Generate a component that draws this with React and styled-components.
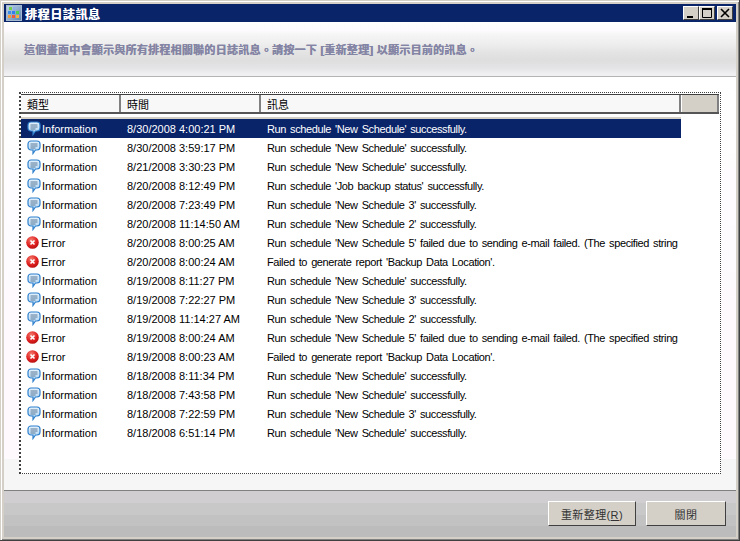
import styled, { createGlobalStyle } from "styled-components"

const GlobalStyle = createGlobalStyle`
    html, body {
        margin: 0;
        padding: 0;
        background: #d4d0c8;
    }
`;
const FONT = `"Liberation Sans", "Noto Sans CJK TC", sans-serif`;

const Win = styled.div`
    box-sizing: border-box;
    width: 740px;
    height: 541px;
    display: flex;
    flex-direction: column;
    background: #d4d0c8;
    padding: 4px 3px 3px 4px;
    border-right: 1px solid #404040;
    border-bottom: 1px solid #404040;
    box-shadow: inset 1px 1px 0 #d4d0c8, inset 2px 2px 0 #fff, inset -1px -1px 0 #808080;
    font-family: ${FONT};
    font-size: 11px;
    color: #000;
`;
const TitleBar = styled.div`
    height: 18px;
    flex: none;
    display: flex;
    align-items: center;
    background: #0a246a;
    padding: 0 3px 0 2px;
`;
const TitleText = styled.span`
    margin-left: 3px;
    font-size: 12px;
    font-weight: 700;
    letter-spacing: 0.6px;
    color: #fff;
    flex: 1;
    text-shadow: 0.3px 0 0 #fff;
`;
const WinBtn = styled.button`
    box-sizing: border-box;
    width: 16px;
    height: 14px;
    padding: 0;
    margin-left: ${(p) => p.$gap || 0}px;
    border: 1px solid;
    border-color: #fff #404040 #404040 #fff;
    background: #d4d0c8;
    display: flex;
    align-items: center;
    justify-content: center;
`;
const Header = styled.div`
    height: 55px;
    flex: none;
    box-sizing: border-box;
    padding: 0 0 0 20px;
    display: flex;
    align-items: center;
    background: linear-gradient(#ffffff 0, #fdfbfd 8px, #f4f4f4 14px, #eeeeee 22px, #e4e4e4 30px, #dedede 38px, #e4e3e6 46px, #f0eff1 52px);
    border-bottom: 1px solid #b4b4b4;
`;
const HeaderText = styled.div`
    font-size: 11px;
    font-weight: 700;
    color: #8484a4;
    letter-spacing: 0.27px;
    text-shadow: 0.3px 0 0 #8484a4;
`;
const Content = styled.div`
    flex: 1;
    min-height: 0;
    padding: 15px 15px 16px 15px;
    background: linear-gradient(#ffffff 0, #fdf9fd 60%, #fdf9fd 92.5%, #f6f6f6 92.5%);
    display: flex;
`;
const ListBox = styled.div`
    flex: 1;
    min-width: 0;
    box-sizing: border-box;
    border: 1px dotted #404040;
    border-left: 2px dotted #404040;
    background: #fff;
    padding: 1px 1px 0 0;
    overflow: hidden;
`;
const Columns = styled.div`
    height: 20px;
    display: flex;
    background: #f8f8f8;
    border-top: 1px solid #404040;
    border-bottom: 2px solid #555;
    box-sizing: border-box;
`;
const Column = styled.div`
    box-sizing: border-box;
    width: ${(p) => p.$w}px;
    flex: ${(p) => (p.$grow ? 1 : "none")};
    padding-left: 6px;
    line-height: 20px;
    background: ${(p) => (p.$grow ? "#d4d0c8" : "#f8f8f8")};
    border-right: 2px solid #808080;
    border-left: ${(p) => (p.$grow ? "1px solid #fff" : "none")};
`;
const Rows = styled.div`
    margin-top: 5px;
`;
const Row = styled.div`
    width: 660px;
    height: 19px;
    display: flex;
    align-items: center;
    white-space: nowrap;
    background: ${(p) => (p.$selected ? "#0a246a" : "transparent")};
    color: ${(p) => (p.$selected ? "#fff" : "#000")};
    box-shadow: ${(p) => (p.$selected ? "0 -2px 0 #d4d0c8" : "none")};
`;
const TypeCell = styled.div`
    width: 105px;
    flex: none;
    box-sizing: border-box;
    padding-left: ${(p) => (p.$error ? 5 : 6)}px;
    display: flex;
    align-items: center;
    gap: ${(p) => (p.$error ? 2 : 1)}px;
`;
const TimeCell = styled.div`
    width: 140px;
    flex: none;
    padding-left: 1px;
    box-sizing: border-box;
`;
const MsgCell = styled.div`
    flex: 1;
    min-width: 0;
    padding-left: 1px;
    letter-spacing: -0.39px;
    word-spacing: 1.4px;
`;
const Footer = styled.div`
    height: 47px;
    flex: none;
    box-sizing: border-box;
    border-top: 1px solid #808080;
    background: linear-gradient(#d0ced0 0, #d0ced0 12px, #c8c8c8 12px, #c8c8c8 24px, #c2c2c2 24px, #c2c2c2 35px, #bcbcbc 35px);
    display: flex;
    justify-content: flex-end;
    align-items: flex-start;
    gap: 10px;
    padding: 10px 10px 0 0;
`;
const Button = styled.button`
    box-sizing: border-box;
    width: ${(p) => p.$w}px;
    height: 25px;
    padding: 0;
    background: #d4d0c8;
    border: 1px solid;
    border-color: #fff #404040 #404040 #fff;
    font-family: ${FONT};
    font-size: 11px;
    letter-spacing: 0.4px;
    color: #333;
`;
const Underline = styled.span`
    text-decoration: underline;
`;

const AppIcon = () => (
    <svg width="16" height="16" viewBox="0 0 16 16">
        <defs>
            <linearGradient id="appbg" x1="0" y1="0" x2="1" y2="1">
                <stop offset="0" stopColor="#c4d6ea" />
                <stop offset="1" stopColor="#5b83b0" />
            </linearGradient>
        </defs>
        <rect x="0.5" y="0.5" width="15" height="15" fill="url(#appbg)" stroke="#a4b8d0" />
        <rect x="3" y="2" width="3" height="3" fill="#72d04a" />
        <rect x="7" y="2" width="3" height="3" fill="#8fb0e0" />
        <rect x="2" y="6" width="3" height="3" fill="#3f8fe8" />
        <rect x="6" y="6" width="3" height="3" fill="#2f7ff0" />
        <rect x="10" y="6" width="3" height="3" fill="#4cd050" />
        <rect x="2" y="10" width="3" height="3" fill="#f09a3c" />
        <rect x="6" y="10" width="3" height="3" fill="#f0583a" />
        <rect x="10" y="10" width="3" height="3" fill="#f8b03c" />
    </svg>
);

const InfoIcon = () => (
    <svg width="14" height="15" viewBox="0 0 14 15">
        <defs>
            <linearGradient id="bubble" x1="0" y1="0" x2="0" y2="1">
                <stop offset="0" stopColor="#e4f1fc" />
                <stop offset="1" stopColor="#a8d2f4" />
            </linearGradient>
        </defs>
        <path
            d="M4 1h6a3 3 0 0 1 3 3v3a3 3 0 0 1-3 3H8.500L6 13.500V10H4a3 3 0 0 1-3-3V4a3 3 0 0 1 3-3z"
            fill="url(#bubble)"
            stroke="#2f80cc"
            strokeWidth="1.200"
        />
        <path d="M3.500 4h7M3.500 6h7M3.500 8h5" stroke="#5f7a96" strokeWidth="1" />
    </svg>
);

const ErrorIcon = () => (
    <svg width="13" height="13" viewBox="0 0 13 13">
        <defs>
            <radialGradient id="err" cx="0.4" cy="0.3" r="0.8">
                <stop offset="0" stopColor="#f47a6c" />
                <stop offset="0.6" stopColor="#dd1d1d" />
                <stop offset="1" stopColor="#a80d0d" />
            </radialGradient>
        </defs>
        <circle cx="6.500" cy="6.500" r="6.300" fill="url(#err)" />
        <path d="M4.500 4.500l4 4M8.500 4.500l-4 4" stroke="#fff" strokeWidth="1.600" />
    </svg>
);

const DOING = "Run schedule";
const FAILED = `${DOING} 'New Schedule 5' failed due to sending e-mail failed. (The specified string`;
const REPORT = "Failed to generate report 'Backup Data Location'.";
const ok = (name) => `${DOING} '${name}' successfully.`;

const logs = [
    ["Information", "8/30/2008 4:00:21 PM", ok("New Schedule")],
    ["Information", "8/30/2008 3:59:17 PM", ok("New Schedule")],
    ["Information", "8/21/2008 3:30:23 PM", ok("New Schedule")],
    ["Information", "8/20/2008 8:12:49 PM", ok("Job backup status")],
    ["Information", "8/20/2008 7:23:49 PM", ok("New Schedule 3")],
    ["Information", "8/20/2008 11:14:50 AM", ok("New Schedule 2")],
    ["Error", "8/20/2008 8:00:25 AM", FAILED],
    ["Error", "8/20/2008 8:00:24 AM", REPORT],
    ["Information", "8/19/2008 8:11:27 PM", ok("New Schedule")],
    ["Information", "8/19/2008 7:22:27 PM", ok("New Schedule 3")],
    ["Information", "8/19/2008 11:14:27 AM", ok("New Schedule 2")],
    ["Error", "8/19/2008 8:00:24 AM", FAILED],
    ["Error", "8/19/2008 8:00:23 AM", REPORT],
    ["Information", "8/18/2008 8:11:34 PM", ok("New Schedule")],
    ["Information", "8/18/2008 7:43:58 PM", ok("New Schedule")],
    ["Information", "8/18/2008 7:22:59 PM", ok("New Schedule 3")],
    ["Information", "8/18/2008 6:51:14 PM", ok("New Schedule")],
];

export default function App() {
    return (
        <>
            <GlobalStyle />
            <Win>
                <TitleBar>
                    <AppIcon />
                    <TitleText>排程日誌訊息</TitleText>
                    <WinBtn>
                        <svg width="10" height="10" viewBox="0 0 10 10">
                            <path d="M1 8h6v2H1z" fill="#000" />
                        </svg>
                    </WinBtn>
                    <WinBtn>
                        <svg width="10" height="10" viewBox="0 0 10 10">
                            <path d="M0.500 1.500h9v8h-9z" fill="none" stroke="#000" />
                            <path d="M0 1h10" stroke="#000" strokeWidth="2" />
                        </svg>
                    </WinBtn>
                    <WinBtn $gap={2}>
                        <svg width="10" height="10" viewBox="0 0 10 10">
                            <path d="M1 1l8 8M9 1l-8 8" stroke="#000" strokeWidth="1.600" />
                        </svg>
                    </WinBtn>
                </TitleBar>
                <Header>
                    <HeaderText>這個畫面中會顯示與所有排程相關聯的日誌訊息。請按一下 [重新整理] 以顯示目前的訊息。</HeaderText>
                </Header>
                <Content>
                    <ListBox>
                        <Columns>
                            <Column $w={100}>類型</Column>
                            <Column $w={140}>時間</Column>
                            <Column $w={420}>訊息</Column>
                            <Column $grow />
                        </Columns>
                        <Rows>
                            {logs.map((log, i) => (
                                <Row key={i} $selected={i === 0}>
                                    <TypeCell $error={log[0] === "Error"}>
                                        {log[0] === "Error" ? <ErrorIcon /> : <InfoIcon />}
                                        {log[0]}
                                    </TypeCell>
                                    <TimeCell>{log[1]}</TimeCell>
                                    <MsgCell>{log[2]}</MsgCell>
                                </Row>
                            ))}
                        </Rows>
                    </ListBox>
                </Content>
                <Footer>
                    <Button $w={88}>
                        重新整理(<Underline>R</Underline>)
                    </Button>
                    <Button $w={80}>關閉</Button>
                </Footer>
            </Win>
        </>
    )
}
